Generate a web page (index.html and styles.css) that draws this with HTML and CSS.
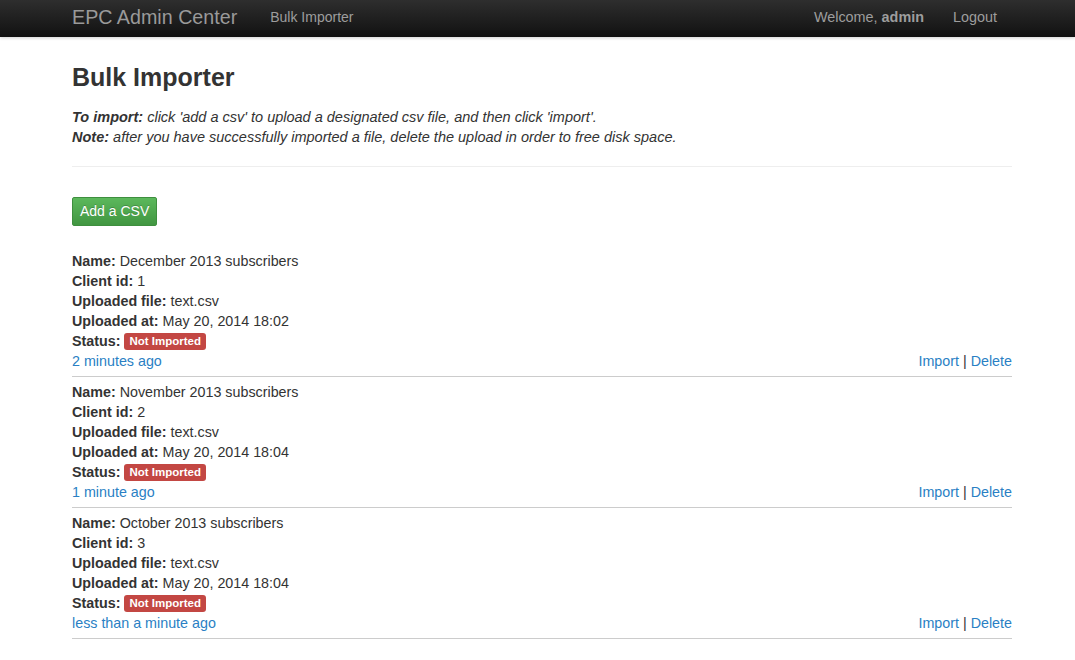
FILE: index.html
```html
<!DOCTYPE html>
<html>
<head>
<meta charset="utf-8">
<title>Bulk Importer</title>
<link rel="stylesheet" href="styles.css">
</head>
<body>
<nav class="navbar">
  <div class="nav-inner">
    <a class="brand" href="#">EPC Admin Center</a>
    <a class="nav-link" href="#">Bulk Importer</a>
    <div class="nav-right">
      <span class="nav-text">Welcome, <b>admin</b></span>
      <a class="nav-link logout" href="#">Logout</a>
    </div>
  </div>
</nav>
<main class="container">
  <h1 class="title">Bulk Importer</h1>
  <p class="intro"><b>To import:</b> click 'add a csv' to upload a designated csv file, and then click 'import'.</p>
  <p class="intro"><b>Note:</b> after you have successfully imported a file, delete the upload in order to free disk space.</p>
  <hr class="divider">
  <a class="btn-success" href="#">Add a CSV</a>
  <div class="uploads">
    <div class="upload">
      <div><b>Name:</b> December 2013 subscribers</div>
      <div><b>Client id:</b> 1</div>
      <div><b>Uploaded file:</b> text.csv</div>
      <div><b>Uploaded at:</b> May 20, 2014 18:02</div>
      <div class="status"><b>Status:</b> <span class="label">Not Imported</span></div>
      <div class="row-foot"><a href="#">2 minutes ago</a><span><a href="#">Import</a> | <a href="#">Delete</a></span></div>
    </div>
    <div class="upload">
      <div><b>Name:</b> November 2013 subscribers</div>
      <div><b>Client id:</b> 2</div>
      <div><b>Uploaded file:</b> text.csv</div>
      <div><b>Uploaded at:</b> May 20, 2014 18:04</div>
      <div class="status"><b>Status:</b> <span class="label">Not Imported</span></div>
      <div class="row-foot"><a href="#">1 minute ago</a><span><a href="#">Import</a> | <a href="#">Delete</a></span></div>
    </div>
    <div class="upload">
      <div><b>Name:</b> October 2013 subscribers</div>
      <div><b>Client id:</b> 3</div>
      <div><b>Uploaded file:</b> text.csv</div>
      <div><b>Uploaded at:</b> May 20, 2014 18:04</div>
      <div class="status"><b>Status:</b> <span class="label">Not Imported</span></div>
      <div class="row-foot"><a href="#">less than a minute ago</a><span><a href="#">Import</a> | <a href="#">Delete</a></span></div>
    </div>
  </div>
</main>
</body>
</html>
```
FILE: styles.css
```css
* { box-sizing: border-box; }
html, body { margin: 0; padding: 0; }
body {
  font-family: "Liberation Sans", Arial, Helvetica, sans-serif;
  font-size: 14.3px;
  line-height: 20px;
  color: #333;
  background: #fff;
}
a { color: #2a7fc4; text-decoration: none; }

.navbar {
  height: 37px;
  background: linear-gradient(to bottom, #2e2e2e 0%, #111 100%);
  box-shadow: 0 1px 3px rgba(0,0,0,0.18);
}
.nav-inner {
  width: 940px;
  margin-left: 72px;
  height: 37px;
  display: flex;
  align-items: center;
}
.brand {
  color: #9a9a9a;
  font-size: 19.7px;
  line-height: 20px;
  padding-bottom: 3px;
}
.nav-link {
  color: #9d9d9d;
  font-size: 14px;
  margin-left: 33px;
  padding-bottom: 4px;
}
.nav-right {
  margin-left: auto;
  display: flex;
  align-items: center;
}
.nav-text {
  color: #9d9d9d;
  font-size: 14.4px;
  padding-bottom: 4px;
}
.nav-text b { color: #9d9d9d; }
.logout { margin-left: 29px; margin-right: 15px; font-size: 14.4px; }

.container {
  width: 940px;
  margin-left: 72px;
}
.title {
  font-size: 25px;
  line-height: 26px;
  font-weight: bold;
  margin: 27px 0 17px;
}
.intro {
  margin: 0;
  font-style: italic;
  font-size: 14.5px;
}
.divider {
  border: 0;
  border-top: 1px solid #eee;
  margin: 19px 0 30px;
  height: 0;
}
.btn-success {
  display: inline-block;
  color: #fff;
  font-size: 14px;
  line-height: 19px;
  padding: 4px 7px;
  border: 1px solid #3e8f3e;
  border-radius: 2px;
  background: linear-gradient(to bottom, #5cb85c 0%, #419641 100%);
  text-shadow: 0 -1px 0 rgba(0,0,0,0.2);
}
.uploads { margin-top: 25px; }
.upload {
  padding-bottom: 5px;
  border-bottom: 1px solid #ccc;
  margin-bottom: 5px;
}
.status { height: 20px; }
.label {
  display: inline-block;
  background: #c34743;
  color: #fff;
  font-size: 11.5px;
  font-weight: bold;
  line-height: 12px;
  padding: 2px 5px 3px;
  border-radius: 3px;
  vertical-align: 1px;
}
.row-foot {
  display: flex;
  justify-content: space-between;
  height: 20px;
}
```
